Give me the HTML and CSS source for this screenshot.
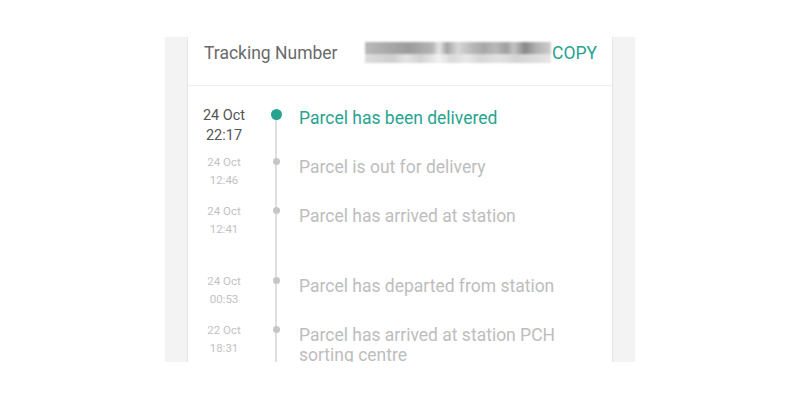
FILE: index.html
```html
<!DOCTYPE html>
<html lang="en">
<head>
  <meta charset="UTF-8" />
  <meta name="viewport" content="width=device-width, initial-scale=1.0"/>
  <title>Parcel Tracking</title>
  <link rel="stylesheet" href="styles.css">
</head>
<body>
  <div class="screen">
    <div class="card">
      <div class="tracking-header">
        <span class="tracking-label">Tracking Number</span>
        <span class="tracking-number">
          <span class="blur-row blur-top"></span>
          <span class="blur-row blur-bottom"></span>
        </span>
        <span class="copy-btn">COPY</span>
      </div>

      <div class="timeline">
        <div class="event current">
          <div class="event-date">24 Oct<br>22:17</div>
          <div class="event-marker"><span class="dot"></span></div>
          <div class="event-text">Parcel has been delivered</div>
        </div>
        <div class="event">
          <div class="event-date">24 Oct<br>12:46</div>
          <div class="event-marker"><span class="dot"></span></div>
          <div class="event-text">Parcel is out for delivery</div>
        </div>
        <div class="event event-wide">
          <div class="event-date">24 Oct<br>12:41</div>
          <div class="event-marker"><span class="dot"></span></div>
          <div class="event-text">Parcel has arrived at station</div>
        </div>
        <div class="event">
          <div class="event-date">24 Oct<br>00:53</div>
          <div class="event-marker"><span class="dot"></span></div>
          <div class="event-text">Parcel has departed from station</div>
        </div>
        <div class="event">
          <div class="event-date">22 Oct<br>18:31</div>
          <div class="event-marker"><span class="dot"></span></div>
          <div class="event-text">Parcel has arrived at station PCH<br>sorting centre</div>
        </div>
      </div>
    </div>
  </div>
</body>
</html>
```

FILE: styles.css
```css
body {
  margin: 0;
  padding: 0;
  background-color: #fff;
  font-family: Roboto, "Liberation Sans", sans-serif;
}
.screen {
  width: 470px;
  height: 325px;
  margin: 37px 0 0 165px;
  padding: 0 22px;
  box-sizing: border-box;
  background-color: #f3f3f3;
  overflow: hidden;
}
.card {
  height: 100%;
  background: #fff;
  border-left: 1px solid #e4e4e4;
  border-right: 1px solid #e4e4e4;
}
.tracking-header {
  display: flex;
  align-items: center;
  height: 49px;
  padding: 0 15px 16px 16px;
  box-sizing: border-box;
  border-bottom: 1px solid #eeeeee;
}
.tracking-label {
  font-size: 17.5px;
  color: #6a6a6a;
}
.tracking-number {
  display: flex;
  flex-direction: column;
  width: 186px;
  height: 22px;
  margin-left: auto;
  margin-right: 1px;
  filter: blur(1.2px);
}
.blur-row {
  display: block;
}
.blur-top {
  height: 12px;
  background: linear-gradient(90deg,
    #b9b9b9 0, #a9a9a9 12%, #9c9c9c 24%, #b4b4b4 36%, #e6e6e6 40%,
    #a4a4a4 44%, #d8d8d8 50%, #bdbdbd 56%, #a8a8a8 64%, #b9b9b9 70%,
    #a0a0a0 76%, #c4c4c4 80%, #888 86%, #b0b0b0 92%, #cfcfcf 100%);
}
.blur-bottom {
  height: 9px;
  background: linear-gradient(90deg,
    #dcdcdc 0, #cfcfcf 15%, #e4e4e4 22%, #d2d2d2 30%, #f2f2f2 40%,
    #dadada 46%, #e8e8e8 55%, #d6d6d6 62%, #e2e2e2 72%, #d3d3d3 82%, #e6e6e6 100%);
}
.copy-btn {
  font-size: 17.5px;
  color: #27a38f;
}
.timeline {
  padding: 20px 0 0 7px;
}
.event {
  display: grid;
  grid-template-columns: 58px 46px 1fr;
  padding-bottom: 13px;
}
.event-wide {
  padding-bottom: 34px;
}
.event-date {
  text-align: center;
  font-size: 11.5px;
  line-height: 18px;
  color: #c2c2c2;
}
.event-marker {
  position: relative;
  display: flex;
  justify-content: center;
}
.event-marker::before {
  content: "";
  position: absolute;
  top: 0;
  bottom: -40px;
  left: 50%;
  width: 2px;
  margin-left: -1px;
  background: #dedede;
}
.dot {
  position: relative;
  width: 7px;
  height: 7px;
  margin-top: 5px;
  border-radius: 50%;
  background: #c6c6c6;
}
.event-text {
  margin-top: 4px;
  font-size: 17.5px;
  line-height: 20px;
  color: #bdbdbd;
}
.current {
  padding-bottom: 7px;
}
.current .event-date {
  font-size: 14.5px;
  line-height: 20px;
  color: #555;
}
.current .event-marker::before {
  top: 8px;
}
.current .dot {
  width: 11px;
  height: 11px;
  margin-top: 3px;
  background: #27a38f;
}
.current .event-text {
  margin-top: 2px;
  color: #27a38f;
}
```
